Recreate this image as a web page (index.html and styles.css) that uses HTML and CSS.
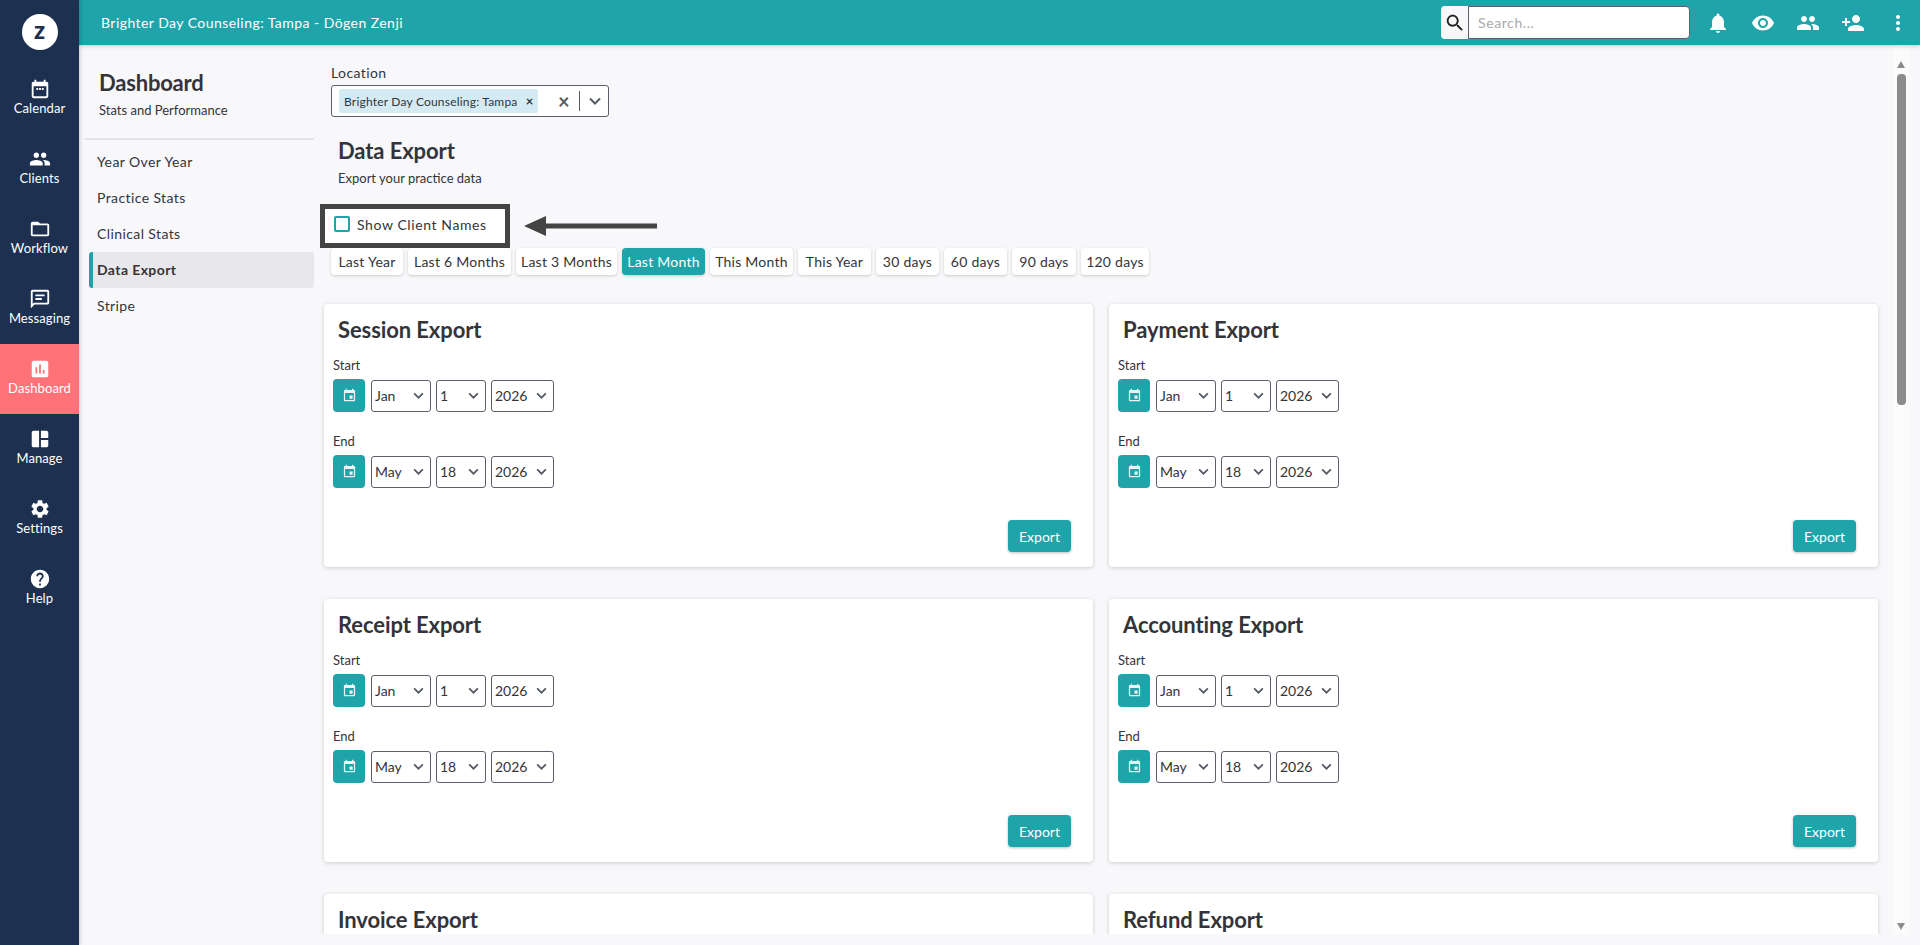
FILE: index.html
```html
<!DOCTYPE html>
<html lang="en">
<head>
    <meta charset="UTF-8">
    <title>Dashboard - Data Export</title>
    <link rel="stylesheet" href="styles.css">
</head>
<body>
    <nav class="sidebar">
        <div class="logo-wrap"><div class="logo">z</div></div>
        <a class="side-item"><svg viewBox="0 0 24 24"><path d="M19 4h-1V2h-2v2H8V2H6v2H5c-1.11 0-2 .9-2 2v14c0 1.1.89 2 2 2h14c1.1 0 2-.9 2-2V6c0-1.1-.9-2-2-2zm0 16H5V9h14v11zM8 11h2v2H8zm3 0h2v2h-2zm3 0h2v2h-2z"/></svg>Calendar</a>
        <a class="side-item"><svg viewBox="0 0 24 24"><path d="M16 11c1.66 0 2.99-1.34 2.99-3S17.66 5 16 5c-1.66 0-3 1.34-3 3s1.34 3 3 3zm-8 0c1.66 0 2.99-1.34 2.99-3S9.66 5 8 5C6.34 5 5 6.34 5 8s1.34 3 3 3zm0 2c-2.33 0-7 1.17-7 3.5V19h14v-2.5c0-2.33-4.67-3.5-7-3.5zm8 0c-.29 0-.62.02-.97.05 1.16.84 1.97 1.97 1.97 3.45V19h6v-2.5c0-2.33-4.67-3.5-7-3.5z"/></svg>Clients</a>
        <a class="side-item"><svg viewBox="0 0 24 24"><path d="M20 6h-8l-2-2H4c-1.1 0-1.99.9-1.99 2L2 18c0 1.1.9 2 2 2h16c1.1 0 2-.9 2-2V8c0-1.1-.9-2-2-2zm0 12H4V8h16v10z"/></svg>Workflow</a>
        <a class="side-item"><svg viewBox="0 0 24 24"><path d="M20 2H4c-1.1 0-1.99.9-1.99 2L2 22l4-4h14c1.1 0 2-.9 2-2V4c0-1.1-.9-2-2-2zm0 14H5.17L4 17.17V4h16v12zM7 11h7v2H7zm0-4h10v2H7z"/></svg>Messaging</a>
        <a class="side-item active"><svg viewBox="0 0 24 24"><path d="M19 3H5c-1.1 0-2 .9-2 2v14c0 1.1.9 2 2 2h14c1.1 0 2-.9 2-2V5c0-1.1-.9-2-2-2zM9 17H7v-7h2v7zm4 0h-2V7h2v10zm4 0h-2v-4h2v4z"/></svg>Dashboard</a>
        <a class="side-item"><svg viewBox="0 0 24 24"><path d="M5 3h6v18H5c-1.1 0-2-.9-2-2V5c0-1.1.9-2 2-2zm8 0h6c1.1 0 2 .9 2 2v6h-8zm0 10h8v6c0 1.1-.9 2-2 2h-6z"/></svg>Manage</a>
        <a class="side-item"><svg viewBox="0 0 24 24"><path d="M19.14 12.94c.04-.3.06-.61.06-.94 0-.32-.02-.64-.07-.94l2.03-1.58c.18-.14.23-.41.12-.61l-1.92-3.32c-.12-.22-.37-.29-.59-.22l-2.39.96c-.5-.38-1.03-.7-1.62-.94l-.36-2.54c-.04-.24-.24-.41-.48-.41h-3.84c-.24 0-.43.17-.47.41l-.36 2.54c-.59.24-1.13.57-1.62.94l-2.39-.96c-.22-.08-.47 0-.59.22L2.74 8.87c-.12.21-.08.47.12.61l2.03 1.58c-.05.3-.09.63-.09.94s.02.64.07.94l-2.03 1.58c-.18.14-.23.41-.12.61l1.92 3.32c.12.22.37.29.59.22l2.39-.96c.5.38 1.03.7 1.62.94l.36 2.54c.05.24.24.41.48.41h3.84c.24 0 .44-.17.47-.41l.36-2.54c.59-.24 1.13-.56 1.62-.94l2.39.96c.22.08.47 0 .59-.22l1.92-3.32c.12-.22.07-.47-.12-.61l-2.01-1.58zM12 15.6c-1.98 0-3.6-1.62-3.6-3.6s1.62-3.6 3.6-3.6 3.6 1.62 3.6 3.6-1.62 3.6-3.6 3.6z"/></svg>Settings</a>
        <a class="side-item"><svg viewBox="0 0 24 24"><path d="M12 2C6.48 2 2 6.48 2 12s4.48 10 10 10 10-4.48 10-10S17.52 2 12 2zm1 17h-2v-2h2v2zm2.07-7.75l-.9.92C13.45 12.9 13 13.5 13 15h-2v-.5c0-1.1.45-2.1 1.17-2.83l1.24-1.26c.37-.36.59-.86.59-1.41 0-1.1-.9-2-2-2s-2 .9-2 2H8c0-2.21 1.79-4 4-4s4 1.79 4 4c0 .88-.36 1.68-.93 2.25z"/></svg>Help</a>
    </nav>

    <div class="page">
        <header class="topbar">
            <div class="topbar-title">Brighter Day Counseling: Tampa - Dōgen Zenji</div>
            <div class="search">
                <span class="search-icon"><svg viewBox="0 0 24 24"><path d="M15.5 14h-.79l-.28-.27C15.41 12.59 16 11.11 16 9.5 16 5.91 13.09 3 9.5 3S3 5.91 3 9.5 5.91 16 9.5 16c1.61 0 3.09-.59 4.23-1.57l.27.28v.79l5 4.99L20.49 19l-4.99-5zm-6 0C7.01 14 5 11.99 5 9.5S7.01 5 9.5 5 14 7.01 14 9.5 11.99 14 9.5 14z"/></svg></span>
                <input class="search-input" type="text" placeholder="Search...">
            </div>
            <div class="top-icons">
                <svg viewBox="0 0 24 24"><path d="M12 22c1.1 0 2-.9 2-2h-4c0 1.1.89 2 2 2zm6-6v-5c0-3.07-1.64-5.64-4.5-6.32V4c0-.83-.67-1.5-1.5-1.5s-1.5.67-1.5 1.5v.68C7.63 5.36 6 7.92 6 11v5l-2 2v1h16v-1l-2-2z"/></svg>
                <svg viewBox="0 0 24 24"><path d="M12 4.5C7 4.5 2.73 7.61 1 12c1.73 4.39 6 7.5 11 7.5s9.27-3.11 11-7.5c-1.73-4.39-6-7.5-11-7.5zM12 17c-2.76 0-5-2.24-5-5s2.24-5 5-5 5 2.24 5 5-2.24 5-5 5zm0-8c-1.66 0-3 1.34-3 3s1.34 3 3 3 3-1.34 3-3-1.34-3-3-3z"/></svg>
                <svg viewBox="0 0 24 24"><path d="M16 11c1.66 0 2.99-1.34 2.99-3S17.66 5 16 5c-1.66 0-3 1.34-3 3s1.34 3 3 3zm-8 0c1.66 0 2.99-1.34 2.99-3S9.66 5 8 5C6.34 5 5 6.34 5 8s1.34 3 3 3zm0 2c-2.33 0-7 1.17-7 3.5V19h14v-2.5c0-2.33-4.67-3.5-7-3.5zm8 0c-.29 0-.62.02-.97.05 1.16.84 1.97 1.97 1.97 3.45V19h6v-2.5c0-2.33-4.67-3.5-7-3.5z"/></svg>
                <svg viewBox="0 0 24 24"><path d="M15 12c2.21 0 4-1.79 4-4s-1.79-4-4-4-4 1.79-4 4 1.79 4 4 4zm-9-2V7H4v3H1v2h3v3h2v-3h3v-2H6zm9 4c-2.67 0-8 1.34-8 4v2h16v-2c0-2.66-5.33-4-8-4z"/></svg>
                <svg viewBox="0 0 24 24"><path d="M12 8c1.1 0 2-.9 2-2s-.9-2-2-2-2 .9-2 2 .9 2 2 2zm0 2c-1.1 0-2 .9-2 2s.9 2 2 2 2-.9 2-2-.9-2-2-2zm0 6c-1.1 0-2 .9-2 2s.9 2 2 2 2-.9 2-2-.9-2-2-2z"/></svg>
            </div>
        </header>

        <div class="body-row">
            <aside class="subnav">
                <div class="subnav-head">
                    <h1>Dashboard</h1>
                    <p>Stats and Performance</p>
                </div>
                <ul class="subnav-list">
                    <li>Year Over Year</li>
                    <li>Practice Stats</li>
                    <li>Clinical Stats</li>
                    <li class="current">Data Export</li>
                    <li>Stripe</li>
                </ul>
            </aside>

            <main class="content">
                <label class="field-label">Location</label>
                <div class="multi-select">
                    <span class="tag">Brighter Day Counseling: Tampa <b>×</b></span>
                    <span class="multi-clear">×</span>
                    <span class="multi-sep"></span>
                    <svg class="multi-arrow" viewBox="0 0 12 8"><path d="M1 1.5l5 5 5-5" /></svg>
                </div>

                <h2 class="page-title">Data Export</h2>
                <p class="page-sub">Export your practice data</p>

                <div class="names-row">
                    <div class="names-box">
                        <span class="checkbox"></span>
                        <span>Show Client Names</span>
                    </div>
                    <svg class="names-arrow" viewBox="0 0 133 20"><path d="M133 7.500H22V0L0 10l22 10v-7.500h111z"/></svg>
                </div>

                <div class="pills">
                    <button class="pill">Last Year</button>
                    <button class="pill">Last 6 Months</button>
                    <button class="pill">Last 3 Months</button>
                    <button class="pill on">Last Month</button>
                    <button class="pill">This Month</button>
                    <button class="pill">This Year</button>
                    <button class="pill">30 days</button>
                    <button class="pill">60 days</button>
                    <button class="pill">90 days</button>
                    <button class="pill">120 days</button>
                </div>

                <div class="cards" id="cards"></div>
            </main>

            <div class="scrollbar">
                <span class="arrow-up"></span>
                <span class="thumb"></span>
                <span class="arrow-down"></span>
            </div>
        </div>
    </div>

    <script src="cards.js"></script>
</body>
</html>
```

FILE: cards.js
```js
const cardNames = ['Session Export', 'Payment Export', 'Receipt Export', 'Accounting Export', 'Invoice Export', 'Refund Export'];
const months = ['Jan', 'Feb', 'Mar', 'Apr', 'May', 'Jun', 'Jul', 'Aug', 'Sep', 'Oct', 'Nov', 'Dec'];
const calIcon = '<svg viewBox="0 0 24 24"><path d="M17 12h-5v5h5v-5zM16 1v2H8V1H6v2H5c-1.110 0-1.990.9-1.990 2L3 19c0 1.100.89 2 2 2h14c1.100 0 2-.9 2-2V5c0-1.100-.9-2-2-2h-1V1h-2zm3 18H5V8h14v11z"/></svg>';

function options(list, picked) {
    return list.map(v => `<option${v == picked ? ' selected' : ''}>${v}</option>`).join('');
}

function dateRow(label, month, day) {
    const days = Array.from({ length: 31 }, (_, i) => i + 1);
    return `<div class="date-block">
        <div class="date-label">${label}</div>
        <div class="date-row">
            <button class="cal-btn">${calIcon}</button>
            <select class="sel sel-month">${options(months, month)}</select>
            <select class="sel sel-day">${options(days, day)}</select>
            <select class="sel sel-year">${options([2024, 2025, 2026], 2026)}</select>
        </div>
    </div>`;
}

document.getElementById('cards').innerHTML = cardNames.map(name => `<section class="card">
    <h3>${name}</h3>
    ${dateRow('Start', 'Jan', 1)}
    ${dateRow('End', 'May', 18)}
    <div class="card-foot"><button class="export-btn">Export</button></div>
</section>`).join('');
```

FILE: styles.css
```css
* {
    margin: 0;
    padding: 0;
    box-sizing: border-box;
}

html, body {
    height: 100%;
    overflow: hidden;
}

body {
    font-family: 'Lato', 'Open Sans', sans-serif;
    color: #33343a;
    background-color: #f8f8fb;
    display: flex;
}

svg {
    fill: currentColor;
    display: block;
}

/* left bar */
.sidebar {
    width: 79px;
    flex-shrink: 0;
    height: 100%;
    background-color: #1e3050;
    color: #fff;
    box-shadow: 1px 0 4px rgba(0, 0, 0, 0.2);
    position: relative;
    z-index: 3;
}

.logo-wrap {
    height: 64px;
    display: flex;
    justify-content: center;
    padding-top: 14px;
}

.logo {
    width: 36px;
    height: 36px;
    border-radius: 50%;
    background-color: #fff;
    color: #1e3050;
    font-size: 24px;
    font-weight: 900;
    line-height: 32px;
    text-align: center;
}

.side-item {
    height: 70px;
    padding-top: 14px;
    display: flex;
    flex-direction: column;
    align-items: center;
    font-size: 13px;
    letter-spacing: 0.1px;
    line-height: 16px;
}

.side-item svg {
    width: 22px;
    height: 22px;
    flex-shrink: 0;
}

.side-item.active {
    background-color: #ff7378;
}

/* top bar */
.page {
    flex: 1;
    min-width: 0;
    display: flex;
    flex-direction: column;
    height: 100%;
}

.topbar {
    height: 45px;
    flex-shrink: 0;
    background-color: #1ea4a9;
    color: #fff;
    display: flex;
    align-items: center;
    padding: 0 10px 0 22px;
    box-shadow: 0 1px 4px rgba(0, 0, 0, 0.2);
    position: relative;
    z-index: 2;
}

.topbar-title {
    font-size: 14px;
    letter-spacing: 0.45px;
    flex: 1;
}

.search {
    display: flex;
    height: 33px;
}

.search-icon {
    width: 27px;
    background-color: #f8f8fb;
    border-radius: 4px 0 0 4px;
    color: #222;
    display: flex;
    align-items: center;
    justify-content: center;
}

.search-icon svg {
    width: 22px;
    height: 22px;
}

.search-input {
    width: 222px;
    border: 1px solid #5c5f6b;
    border-radius: 0 4px 4px 0;
    padding: 0 9px;
    font-family: inherit;
    font-size: 14px;
    letter-spacing: 0.6px;
}

.search-input::placeholder {
    color: #aaa;
}

.top-icons {
    display: flex;
    gap: 21px;
    margin-left: 16px;
}

.top-icons svg {
    width: 24px;
    height: 24px;
}

/* second column */
.body-row {
    flex: 1;
    min-height: 0;
    display: flex;
    height: 889px;
}

.subnav {
    width: 241px;
    flex-shrink: 0;
    padding: 25px 6px 0;
}

.subnav-head {
    height: 70px;
    padding-left: 14px;
    border-bottom: 2px solid #e3e3e6;
}

.subnav-head h1 {
    font-size: 22px;
    font-weight: 700;
    letter-spacing: -0.2px;
    line-height: 26px;
}

.subnav-head p {
    font-size: 13px;
    line-height: 18px;
    margin-top: 5px;
}

.subnav-list {
    list-style: none;
    margin: 4px 0 0 4px;
    width: 225px;
}

.subnav-list li {
    height: 36px;
    line-height: 35px;
    padding-left: 8px;
    font-size: 14px;
    letter-spacing: 0.4px;
}

.subnav-list .current {
    background-color: #e8e8ec;
    border-left: 4px solid #1ea4a9;
    border-radius: 3px;
    padding-left: 4px;
    font-weight: 700;
}

/* main area */
.content {
    width: 1573px;
    height: 889px;
    overflow: hidden;
    padding: 19px 0 0 4px;
}

.field-label {
    display: block;
    margin-left: 7px;
    font-size: 14px;
    letter-spacing: 0.4px;
    line-height: 17px;
    height: 21px;
}

.multi-select {
    margin-left: 7px;
    width: 278px;
    height: 32px;
    background-color: #fff;
    border: 1px solid #5c5f6b;
    border-radius: 3px;
    display: flex;
    align-items: center;
    padding-left: 7px;
}

.tag {
    background-color: #d4ebf4;
    border-radius: 2px;
    font-size: 12px;
    letter-spacing: 0.2px;
    height: 24px;
    line-height: 24px;
    width: 199px;
    padding-left: 5px;
    white-space: nowrap;
}

.tag b {
    margin-left: 5px;
    font-size: 13px;
}

.multi-clear {
    margin-left: 20px;
    font-size: 20px;
    font-weight: 700;
    color: #555a66;
    line-height: 24px;
}

.multi-sep {
    width: 1px;
    height: 20px;
    background-color: #555a66;
    margin-left: 9px;
}

.multi-arrow {
    width: 12px;
    height: 8px;
    margin-left: 9px;
    fill: none;
    stroke: #555a66;
    stroke-width: 2;
}

.page-title {
    margin: 21px 0 0 14px;
    font-size: 22px;
    font-weight: 700;
    letter-spacing: -0.1px;
    line-height: 26px;
}

.page-sub {
    margin: 5px 0 0 14px;
    font-size: 13px;
    line-height: 18px;
}

.names-row {
    margin: 17px 0 0 -4px;
    display: flex;
    align-items: center;
}

.names-box {
    width: 190px;
    height: 44px;
    border: 5px solid #444;
    background-color: #fff;
    display: flex;
    align-items: center;
    gap: 7px;
    padding: 0 0 4px 9px;
    font-size: 14px;
    letter-spacing: 0.6px;
}

.checkbox {
    width: 16px;
    height: 16px;
    border: 2px solid #1ea4a9;
    border-radius: 2px;
}

.names-arrow {
    width: 133px;
    height: 20px;
    margin-left: 14px;
    fill: #444;
}

.pills {
    margin-left: 7px;
    display: grid;
    grid-template-columns: 72px 103px 101px 83px 83px 73px 63px 63px 64px 68px;
    column-gap: 5px;
    justify-content: start;
    height: 56px;
}

.pill {
    height: 27px;
    border: none;
    border-radius: 4px;
    background-color: #fff;
    color: #33343a;
    font-family: inherit;
    font-size: 14px;
    letter-spacing: 0.25px;
    box-shadow: 0 1px 3px rgba(0, 0, 0, 0.18);
}

.pill.on {
    background-color: #1ea4a9;
    color: #fff;
}

/* export cards */
.cards {
    display: grid;
    grid-template-columns: 769px 769px;
    column-gap: 16px;
    row-gap: 32px;
}

.card {
    height: 263px;
    background-color: #fff;
    border-radius: 4px;
    box-shadow: 0 1px 4px rgba(0, 0, 0, 0.18);
    padding: 13px 22px 0 9px;
    display: flex;
    flex-direction: column;
}

.card h3 {
    margin-left: 5px;
    font-size: 22px;
    font-weight: 700;
    letter-spacing: -0.1px;
    line-height: 26px;
    height: 26px;
}

.date-block {
    margin-top: 14px;
}

.date-block + .date-block {
    margin-top: 21px;
}

.date-label {
    font-size: 13px;
    line-height: 16px;
    height: 22px;
}

.date-row {
    display: flex;
    align-items: center;
    gap: 5px;
}

.cal-btn {
    width: 32px;
    height: 33px;
    border: none;
    border-radius: 4px;
    background-color: #1ea4a9;
    color: #e8f6f6;
    display: flex;
    align-items: center;
    justify-content: center;
    margin-right: 1px;
}

.cal-btn svg {
    width: 15px;
    height: 15px;
}

.sel {
    height: 32px;
    border: 1px solid #5c5f6b;
    border-radius: 3px;
    background-color: #fff;
    font-family: inherit;
    font-size: 14px;
    color: #33343a;
    padding-left: 3px;
    appearance: none;
    background-image: url("data:image/svg+xml,%3Csvg xmlns='http://www.w3.org/2000/svg' viewBox='0 0 12 8'%3E%3Cpath d='M1 1.500l5 5 5-5' fill='none' stroke='%23555a66' stroke-width='2'/%3E%3C/svg%3E");
    background-repeat: no-repeat;
    background-position: right 6px center;
    background-size: 11px 7px;
}

.sel-month {
    width: 60px;
}

.sel-day {
    width: 50px;
}

.sel-year {
    width: 63px;
}

.card-foot {
    margin-top: auto;
    padding-bottom: 15px;
    display: flex;
    justify-content: flex-end;
}

.export-btn {
    width: 63px;
    height: 32px;
    border: none;
    border-radius: 4px;
    background-color: #1ea4a9;
    color: #fff;
    font-family: inherit;
    font-size: 14px;
    box-shadow: 0 1px 3px rgba(0, 0, 0, 0.25);
}

/* fake scrollbar, the page itself doesn't scroll */
.scrollbar {
    width: 16px;
    height: 889px;
    background-color: #fbfbfc;
    display: flex;
    flex-direction: column;
    align-items: center;
    padding-top: 16px;
}

.arrow-up {
    border-left: 4.500px solid transparent;
    border-right: 4.500px solid transparent;
    border-bottom: 7px solid #8c8c8c;
}

.thumb {
    width: 9px;
    height: 331px;
    margin-top: 6px;
    border-radius: 4px;
    background-color: #8c8c8c;
}

.arrow-down {
    margin-top: auto;
    margin-bottom: 4px;
    border-left: 4.500px solid transparent;
    border-right: 4.500px solid transparent;
    border-top: 7px solid #8c8c8c;
}
```
